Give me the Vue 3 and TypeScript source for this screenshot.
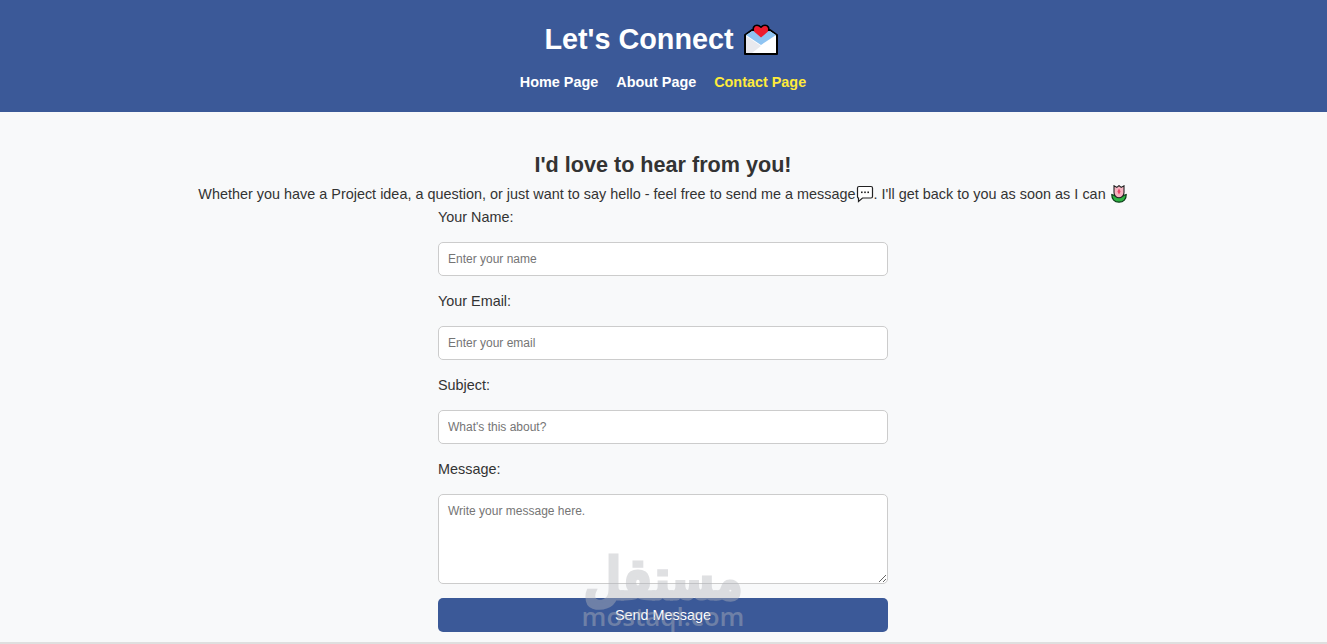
<script setup lang="ts">
const navLinks = [
  { label: 'Home Page', active: false },
  { label: 'About Page', active: false },
  { label: 'Contact Page', active: true },
]
const fields = [
  { label: 'Your Name:', placeholder: 'Enter your name', type: 'text' },
  { label: 'Your Email:', placeholder: 'Enter your email', type: 'email' },
  { label: 'Subject:', placeholder: "What's this about?", type: 'text' },
]
</script>

<template>
  <div class="page">
    <header class="header">
      <h1 class="title">
        Let's Connect
        <svg class="letter" viewBox="0 0 34 31" width="34" height="31" aria-hidden="true">
          <path d="M1 11 L8 6 H26 L33 11 V30 H1 Z" fill="#fff" stroke="#000" stroke-width="2" stroke-linejoin="round" />
          <path d="M2 11 L8.5 7 H25.5 L32 11 L17 21 Z" fill="#8fc4f2" />
          <path d="M2 29 V12 L17 22 L32 12 V29 Z" fill="#fff" />
          <path d="M2 12 L17 22 L8 29 H2 Z" fill="#e9e9ee" />
          <path d="M17 13.5 L10 7.5 C8.5 4 10 1.5 13 1.5 C15 1.5 16 2.5 17 3.5 C18 2.5 19 1.5 21 1.5 C24 1.5 25.5 4 24 7.5 Z" fill="#ee1c2e" />
          <path d="M9.5 7 C8.5 4 10 1.2 13 1.2 C15 1.2 16 2.2 17 3.2 C18 2.2 19 1.2 21 1.2 C24 1.2 25.5 4 24.5 7" fill="none" stroke="#000" stroke-width="1.6" />
        </svg>
      </h1>
      <nav class="nav">
        <a v-for="link in navLinks" :key="link.label" href="#" class="nav-link" :class="{ active: link.active }">{{ link.label }}</a>
      </nav>
    </header>

    <main class="main">
      <h2 class="heading">I'd love to hear from you!</h2>
      <p class="intro">
        Whether you have a Project idea, a question, or just want to say hello - feel free to send me a message<svg class="bubble" viewBox="0 0 18 18" width="18" height="18" aria-hidden="true">
          <path d="M3 1.5 H15 Q16.5 1.5 16.5 3 V11.5 Q16.5 13 15 13 H6.5 L2.5 16.5 V13 Q1.5 13 1.5 11.5 V3 Q1.5 1.5 3 1.5 Z" fill="#fff" stroke="#222" stroke-width="1.2" />
          <rect x="5" y="6.5" width="1.6" height="1.6" fill="#222" />
          <rect x="8.2" y="6.5" width="1.6" height="1.6" fill="#222" />
          <rect x="11.4" y="6.5" width="1.6" height="1.6" fill="#222" />
        </svg>. I'll get back to you as soon as I can <svg class="tulip" viewBox="0 0 16 18" width="16" height="18" aria-hidden="true">
          <path d="M0.8 9.5 C3 10 5 11.5 8 12.5 C11 11.5 13 10 15.2 9.5 C15.4 14 12.5 17.2 8 17.2 C3.5 17.2 0.6 14 0.8 9.5 Z" fill="#2fb344" stroke="#0c3d18" stroke-width="1.2" />
          <path d="M3 0.8 L5.8 2.4 L8 0.6 L10.2 2.4 L13 0.8 L13 7.5 C13 10.5 10.5 12.8 8 12.8 C5.5 12.8 3 10.5 3 7.5 Z" fill="#f7b3c0" stroke="#222" stroke-width="1.1" />
          <path d="M8 3.5 L9.6 6.5 L8 9.5 L6.4 6.5 Z" fill="#e8476a" />
        </svg>
      </p>

      <form class="form" @submit.prevent>
        <div v-for="field in fields" :key="field.label" class="group">
          <label class="label">{{ field.label }}</label>
          <input class="control" :type="field.type" :placeholder="field.placeholder" />
        </div>
        <div class="group">
          <label class="label">Message:</label>
          <textarea class="control area" placeholder="Write your message here."></textarea>
        </div>
        <button class="send" type="submit">Send Message</button>
      </form>
    </main>
    <footer class="footer"></footer>

    <div class="watermark" aria-hidden="true">
      <span class="wm-ar">مستقل</span>
      <span class="wm-en">mostaql.com</span>
    </div>
  </div>
</template>

<style>
html, body { margin: 0; overflow: hidden; background: #f8f9fa; }
</style>

<style scoped>
.page {
  position: relative;
  height: 644px;
  overflow: hidden;
  display: flex;
  flex-direction: column;
  background: #f8f9fa;
  font-family: "Liberation Sans", Arial, sans-serif;
  color: #333;
}
.header {
  height: 112px;
  box-sizing: border-box;
  background: #3b5998;
  color: #fff;
  text-align: center;
  padding: 20px 1px 0 0;
  flex: none;
}
.title {
  margin: 0;
  font-size: 28.8px;
  line-height: 38px;
  font-weight: 700;
}
.letter {
  vertical-align: -6px;
  margin: 0 4px 0 2px;
}
.nav {
  display: flex;
  justify-content: center;
  gap: 18px;
  margin-top: 15px;
}
.nav-link {
  color: #fff;
  font-size: 14.4px;
  line-height: 18px;
  font-weight: 700;
  text-decoration: none;
}
.nav-link.active { color: #ffeb3b; }
.main {
  flex: 1;
  display: flex;
  flex-direction: column;
  align-items: center;
  padding: 39px 1px 0 0;
}
.heading {
  margin: 0;
  font-size: 21.6px;
  line-height: 28px;
  font-weight: 700;
  color: #333;
}
.intro {
  margin: 5px 0 5px;
  font-size: 14.4px;
  line-height: 20px;
  color: #333;
  white-space: nowrap;
  word-spacing: 0.06px;
}
.bubble { vertical-align: -4px; }
.tulip {
  vertical-align: -4px;
  margin: 0 1px 0 1px;
}
.form {
  width: 450px;
  display: flex;
  flex-direction: column;
}
.group {
  display: flex;
  flex-direction: column;
}
.label {
  font-size: 14.4px;
  line-height: 16px;
  margin-bottom: 17px;
  color: #333;
}
.control {
  box-sizing: border-box;
  width: 450px;
  height: 34px;
  margin-bottom: 17px;
  padding: 8px 9px;
  border: 1px solid #ccc;
  border-radius: 5px;
  background: #fff;
  font-family: "Liberation Sans", Arial, sans-serif;
  font-size: 12px;
  color: #333;
  outline: none;
}
.control::placeholder { color: #757575; opacity: 1; }
.area {
  height: 90px;
  margin-bottom: 14px;
  padding: 9px;
  display: block;
}
.send {
  width: 450px;
  height: 34px;
  border: none;
  border-radius: 5px;
  background: #3b5998;
  color: #fff;
  font-family: "Liberation Sans", Arial, sans-serif;
  font-size: 14.4px;
}
.footer {
  flex: none;
  height: 2px;
  background: #dfdfdf;
}
.watermark {
  position: absolute;
  left: 583px;
  top: 548px;
  width: 160px;
  display: flex;
  flex-direction: column;
  align-items: center;
  color: #b4b6bc;
  opacity: 0.42;
  pointer-events: none;
}
.wm-ar {
  font-family: "DejaVu Sans", sans-serif;
  font-weight: 700;
  font-size: 58px;
  line-height: 62px;
  transform: scaleX(0.75);
  -webkit-text-stroke: 3px #b4b6bc;
}
.wm-en {
  font-family: "Open Sans", sans-serif;
  font-weight: 600;
  font-size: 26px;
  line-height: 28px;
  margin-top: -8px;
  white-space: nowrap;
}
</style>
